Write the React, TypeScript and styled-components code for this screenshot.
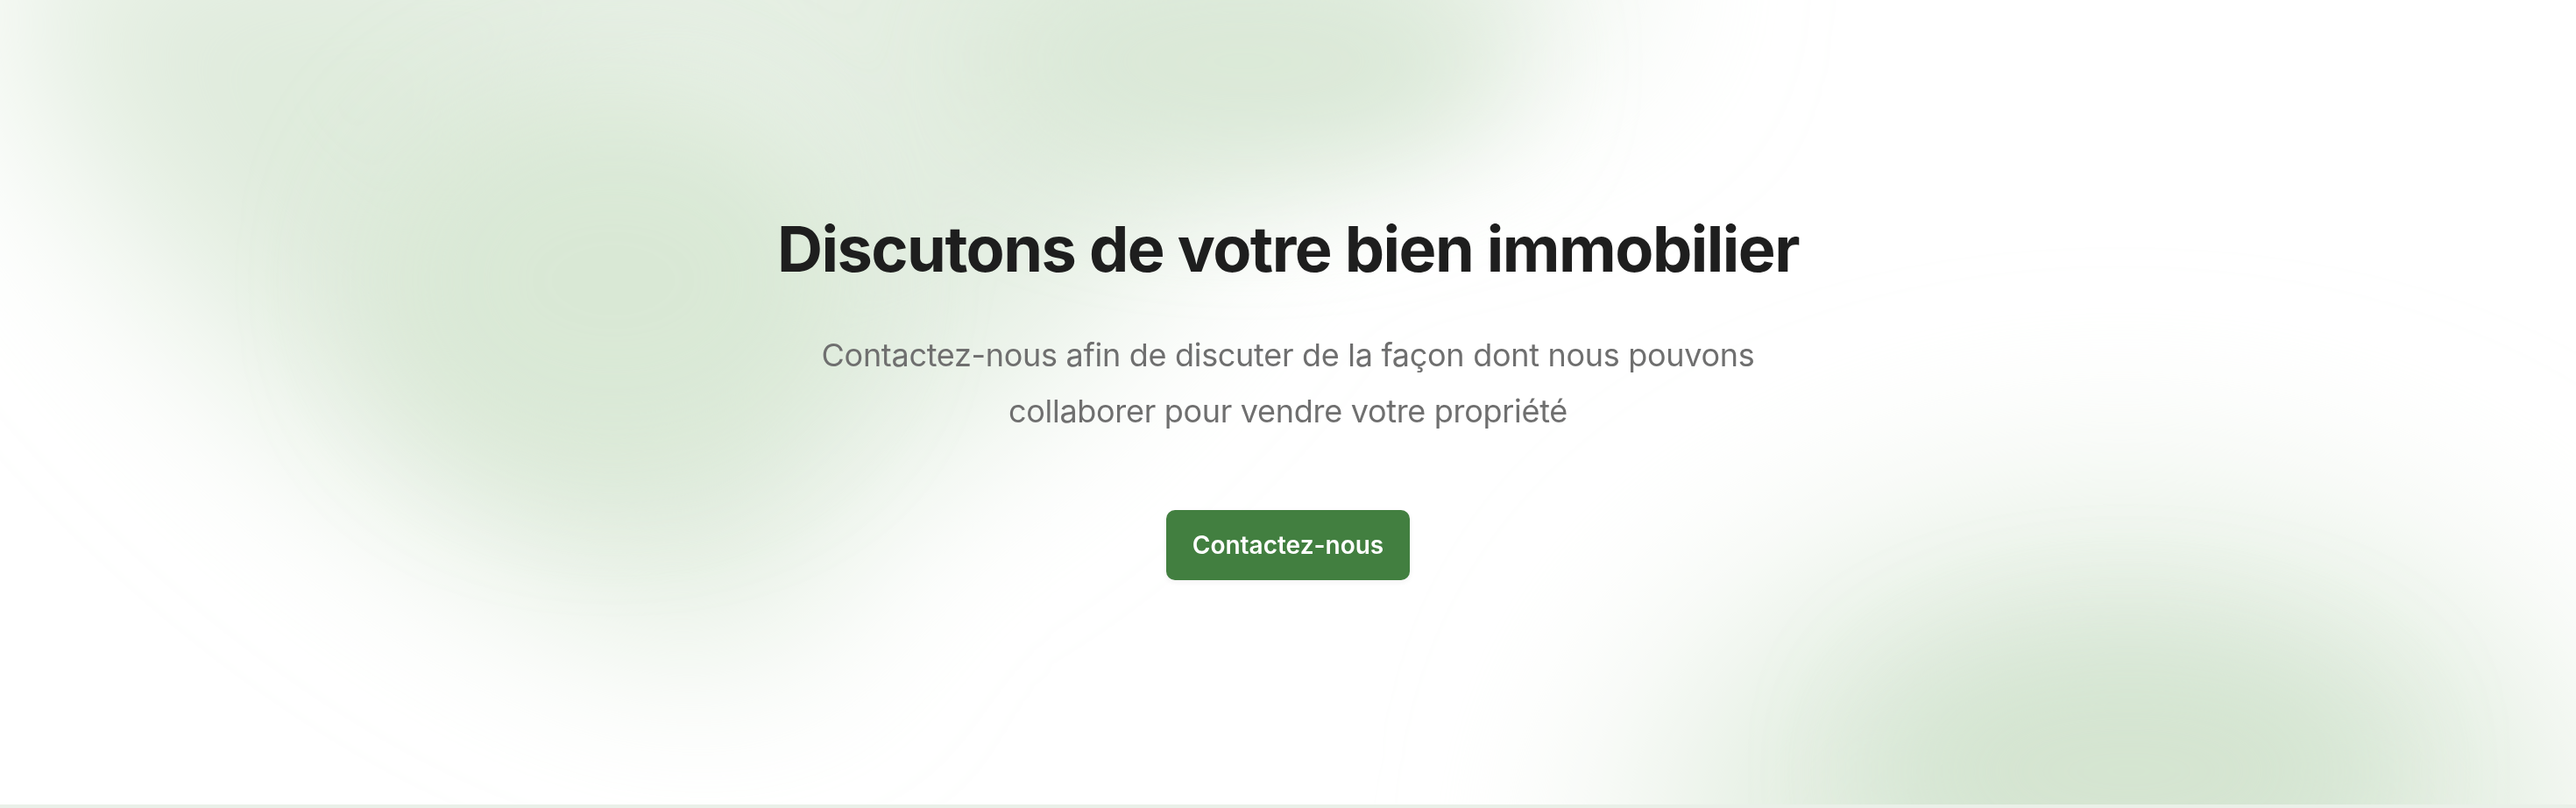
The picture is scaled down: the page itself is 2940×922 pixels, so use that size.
import React from "react";
import styled, { createGlobalStyle } from "styled-components";

const GlobalStyle = createGlobalStyle`
  html, body {
    margin: 0;
    padding: 0;
    background: #ffffff;
  }
  body {
    font-family: Inter, "Noto Sans", "Liberation Sans", sans-serif;
    -webkit-font-smoothing: antialiased;
  }
  * { box-sizing: border-box; }
`;

const Hero = styled.section`
  position: relative;
  overflow: hidden;
  width: 100%;
  height: 922px;
  background: #ffffff;
  border-bottom: 4px solid #e9f0e8;
  display: flex;
  flex-direction: column;
  align-items: center;
  padding-top: 241px;
`;

const Backdrop = styled.svg`
  position: absolute;
  inset: 0;
  width: 100%;
  height: 100%;
  pointer-events: none;
  z-index: 0;
`;

const Content = styled.div`
  position: relative;
  z-index: 1;
  display: flex;
  flex-direction: column;
  align-items: center;
  text-align: center;
`;

const Title = styled.h1`
  margin: 0;
  font-family: Inter, "Noto Sans", "Liberation Sans", sans-serif;
  font-size: 72px;
  line-height: 86px;
  font-weight: 700;
  letter-spacing: -1.5px;
  color: #1e1e1e;
`;

const Lead = styled.p`
  margin: 46px 0 0;
  max-width: 1120px;
  font-family: Inter, "Noto Sans", "Liberation Sans", sans-serif;
  font-size: 36px;
  line-height: 64px;
  font-weight: 400;
  letter-spacing: -0.3px;
  color: #6f6f6f;
`;

const CtaButton = styled.button`
  margin-top: 81px;
  height: 80px;
  min-width: 278px;
  padding: 0 30px;
  border: none;
  border-radius: 10px;
  background: #427f40;
  color: #ffffff;
  font-family: Inter, "Noto Sans", "Liberation Sans", sans-serif;
  font-size: 28px;
  font-weight: 600;
  cursor: pointer;
  box-shadow: 0 2px 6px rgba(0, 0, 0, 0.06);
`;

function GreenHaze() {
  return (
    <Backdrop viewBox="0 0 2940 918" preserveAspectRatio="none" aria-hidden="true">
      <defs>
        <filter id="soft" filterUnits="userSpaceOnUse" x="-600" y="-600" width="4140" height="2118">
          <feGaussianBlur stdDeviation="70" />
        </filter>
        <filter id="softer" filterUnits="userSpaceOnUse" x="-600" y="-600" width="4140" height="2118">
          <feGaussianBlur stdDeviation="110" />
        </filter>
      </defs>
      <g filter="url(#softer)">
        <ellipse cx="1000" cy="-30" rx="860" ry="190" fill="#e4eee2" />
        <ellipse cx="470" cy="300" rx="600" ry="210" fill="#dfebdc" transform="rotate(42 470 300)" />
        <ellipse cx="1130" cy="210" rx="500" ry="190" fill="#e2ede0" transform="rotate(-47 1130 210)" />
        <ellipse cx="2420" cy="980" rx="600" ry="440" fill="#eef4ec" />
        <ellipse cx="2420" cy="910" rx="420" ry="240" fill="#dceada" />
      </g>
      <g filter="url(#soft)">
        <ellipse cx="700" cy="320" rx="270" ry="220" fill="#d9e8d5" />
        <ellipse cx="1420" cy="70" rx="300" ry="130" fill="#dae8d7" />
        <ellipse cx="2430" cy="880" rx="280" ry="140" fill="#d4e4d0" />
      </g>
    </Backdrop>
  );
}

export default function App() {
  return (
    <>
      <GlobalStyle />
      <Hero>
        <GreenHaze />
        <Content>
          <Title>Discutons de votre bien immobilier</Title>
          <Lead>
            Contactez-nous afin de discuter de la façon dont nous pouvons collaborer pour vendre votre propriété
          </Lead>
          <CtaButton type="button">Contactez-nous</CtaButton>
        </Content>
      </Hero>
    </>
  );
}
